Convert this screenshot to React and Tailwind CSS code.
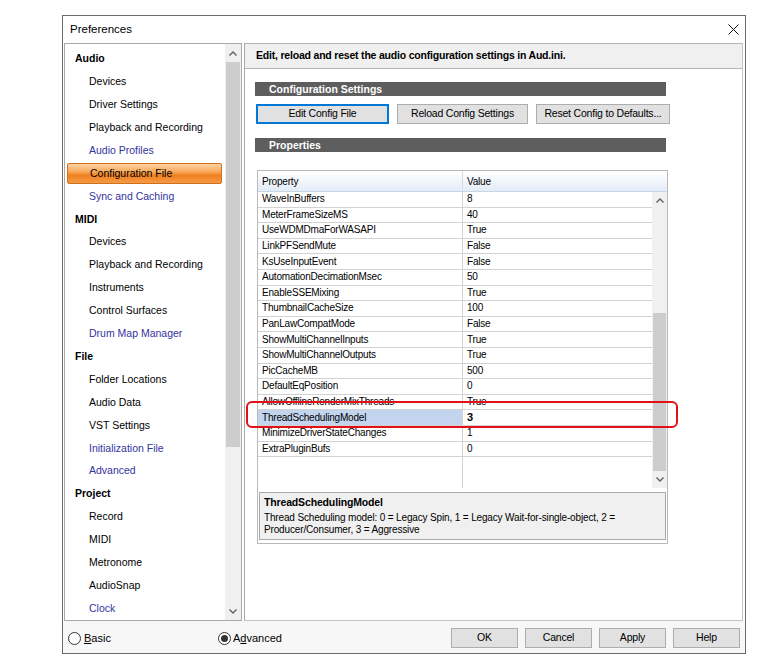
import React from "react";

const nav = [
  { t: "Audio", h: true },
  { t: "Devices" },
  { t: "Driver Settings" },
  { t: "Playback and Recording" },
  { t: "Audio Profiles", blue: true },
  { t: "Configuration File", sel: true },
  { t: "Sync and Caching", blue: true },
  { t: "MIDI", h: true },
  { t: "Devices" },
  { t: "Playback and Recording" },
  { t: "Instruments" },
  { t: "Control Surfaces" },
  { t: "Drum Map Manager", blue: true },
  { t: "File", h: true },
  { t: "Folder Locations" },
  { t: "Audio Data" },
  { t: "VST Settings" },
  { t: "Initialization File", blue: true },
  { t: "Advanced", blue: true },
  { t: "Project", h: true },
  { t: "Record" },
  { t: "MIDI" },
  { t: "Metronome" },
  { t: "AudioSnap" },
  { t: "Clock", blue: true },
];

const props = [
  ["WaveInBuffers", "8"],
  ["MeterFrameSizeMS", "40"],
  ["UseWDMDmaForWASAPI", "True"],
  ["LinkPFSendMute", "False"],
  ["KsUseInputEvent", "False"],
  ["AutomationDecimationMsec", "50"],
  ["EnableSSEMixing", "True"],
  ["ThumbnailCacheSize", "100"],
  ["PanLawCompatMode", "False"],
  ["ShowMultiChannelInputs", "True"],
  ["ShowMultiChannelOutputs", "True"],
  ["PicCacheMB", "500"],
  ["DefaultEqPosition", "0"],
  ["AllowOfflineRenderMixThreads", "True"],
  ["ThreadSchedulingModel", "3", true],
  ["MinimizeDriverStateChanges", "1"],
  ["ExtraPluginBufs", "0"],
];

const Chevron = ({ up }) => (
  <svg width="8" height="5" viewBox="0 0 8 5">
    <polyline
      points={up ? "0.5,4.5 4,1 7.5,4.5" : "0.5,0.5 4,4 7.5,0.5"}
      fill="none"
      stroke="#606060"
      strokeWidth="1.4"
    />
  </svg>
);

const SectionBar = ({ children }) => (
  <div className="w-[411px] h-[14px] bg-[#5e5e5e] text-white font-bold text-[10.5px] leading-[14px] pl-[14px]">
    {children}
  </div>
);

const Btn = ({ children, w, focus }) => (
  <div
    className={`${w} h-[20px] flex items-center justify-center text-[10.5px] tracking-[-0.2px] bg-[#e1e1e1] border ${
      focus ? "border-[#0078d7] shadow-[inset_0_0_0_1px_#0078d7]" : "border-[#adadad]"
    }`}
  >
    {children}
  </div>
);

export default function App() {
  return (
    <div
      className="relative w-[760px] h-[669px] bg-white pl-[62px] pt-[15px] text-black"
      style={{ fontFamily: '"Liberation Sans", Arial, sans-serif' }}
    >
      <div className="w-[684px] h-[639px] border border-[#6b6b6b] bg-white flex flex-col">
        {/* title bar */}
        <div className="h-[27px] flex items-center justify-between pl-[7px] pr-[6px] shrink-0">
          <span className="text-[11.5px]">Preferences</span>
          <svg width="11" height="11" viewBox="0 0 11 11">
            <path d="M0.5 0.5 L10.5 10.5 M10.5 0.5 L0.5 10.5" stroke="#111" strokeWidth="1" />
          </svg>
        </div>

        {/* body */}
        <div className="h-[578px] flex pl-px pr-[2px] shrink-0">
          {/* nav */}
          <div className="w-[178px] h-full border border-[#a9a9a9] flex bg-white">
            <div className="flex-1 overflow-hidden pt-[3.6px] text-[10.5px]">
              {nav.map((n, i) =>
                n.h ? (
                  <div key={i} className="h-[22.92px] flex items-center pl-[10px] font-bold">
                    {n.t}
                  </div>
                ) : n.sel ? (
                  <div key={i} className="h-[22.92px] py-px ml-[2px] mr-[3px]">
                    <div className="h-full flex items-center pl-[22px] rounded-[2px] border border-[#d0701c] bg-[linear-gradient(to_bottom,#fdd3a4,#f8a95c_40%,#f0801f_60%,#f59b46)]">
                      {n.t}
                    </div>
                  </div>
                ) : (
                  <div
                    key={i}
                    className={`h-[22.92px] flex items-center pl-[24px] ${n.blue ? "text-[#33339f]" : ""}`}
                  >
                    {n.t}
                  </div>
                )
              )}
            </div>
            <div className="w-[16px] bg-[#f0f0f0] flex flex-col">
              <div className="h-[18px] flex items-center justify-center">
                <Chevron up />
              </div>
              <div className="h-[385px] mx-[1px] bg-[#cdcdcd]" />
              <div className="flex-1" />
              <div className="h-[17px] flex items-center justify-center">
                <Chevron />
              </div>
            </div>
          </div>

          {/* right panel */}
          <div className="ml-[2px] flex-1 h-full border border-t-0 border-[#c4c4c4] border-l-[#a9a9a9] flex flex-col">
            <div className="h-[26px] bg-[#f0f0f0] border-t border-b border-[#b5b5b5] flex items-center pl-[11px] font-bold text-[10.5px] tracking-[-0.2px]">
              Edit, reload and reset the audio configuration settings in Aud.ini.
            </div>
            <div className="pl-[10px]">
              <div className="mt-[13px]">
                <SectionBar>Configuration Settings</SectionBar>
              </div>
              <div className="mt-[8px] ml-px flex gap-[8px]">
                <Btn w="w-[133px]" focus>
                  Edit Config File
                </Btn>
                <Btn w="w-[131px]">Reload Config Settings</Btn>
                <Btn w="w-[134px]">Reset Config to Defaults...</Btn>
              </div>
              <div className="mt-[14px]">
                <SectionBar>Properties</SectionBar>
              </div>

              {/* property grid */}
              <div className="mt-[18px] ml-[2px] w-[411px] h-[374px] border border-[#b9b9b9] flex flex-col bg-white">
                <div className="h-[21px] flex text-[10px] tracking-[-0.2px] border-b border-[#c5d5ea] bg-[linear-gradient(to_bottom,#ffffff,#f3f7fc_45%,#e2ebf6)]">
                  <div className="w-[205px] border-r border-[#d5dce6] flex items-center pl-[4px]">Property</div>
                  <div className="flex-1 flex items-center pl-[4px]">Value</div>
                </div>
                <div className="h-[296px] flex">
                  <div className="flex-1 flex flex-col text-[10px] tracking-[-0.2px]">
                    {props.map(([k, v, sel]) => (
                      <div key={k} className="h-[15.6px] shrink-0 flex border-b border-[#d2d2d2] leading-none">
                        <div
                          className={`w-[205px] border-r border-[#d2d2d2] flex items-center pl-[4px] whitespace-nowrap overflow-hidden ${
                            sel ? "bg-[#c3d5ee]" : ""
                          }`}
                        >
                          {k}
                        </div>
                        <div className={`flex-1 flex items-center pl-[4px] ${sel ? "font-bold text-[11px]" : ""}`}>
                          {v}
                        </div>
                      </div>
                    ))}
                    <div className="flex-1 flex">
                      <div className="w-[205px] border-r border-[#d2d2d2]" />
                    </div>
                  </div>
                  <div className="w-[15px] bg-[#f0f0f0] flex flex-col">
                    <div className="h-[16px] flex items-center justify-center">
                      <Chevron up />
                    </div>
                    <div className="h-[105px]" />
                    <div className="h-[158px] mx-px bg-[#cdcdcd]" />
                    <div className="flex-1 flex items-center justify-center">
                      <Chevron />
                    </div>
                  </div>
                </div>
                <div className="mt-[4px] mx-px h-[48px] bg-[#f0f0f0] border border-[#a9a9a9] px-[4px] pt-[3px] text-[10px] tracking-[-0.15px] leading-[12px]">
                  <div className="font-bold text-[10.5px] leading-[13px] mb-[3px]">ThreadSchedulingModel</div>
                  <div>
                    Thread Scheduling model: 0 = Legacy Spin, 1 = Legacy Wait-for-single-object, 2 =
                    <br />
                    Producer/Consumer, 3 = Aggressive
                  </div>
                </div>
              </div>
            </div>
          </div>
        </div>

        {/* bottom bar */}
        <div className="flex-1 flex items-center pl-[5px] pr-[5px] pt-[2px] bg-[#f7f7f7] text-[11px]">
          <div className="w-[150px] flex items-center gap-[3px]">
            <span className="w-[13px] h-[13px] rounded-full border border-[#333] bg-white" />
            <span>
              <span className="underline">B</span>asic
            </span>
          </div>
          <div className="flex items-center gap-[2px]">
            <span className="w-[13px] h-[13px] rounded-full border border-[#333] bg-white flex items-center justify-center">
              <span className="w-[7px] h-[7px] rounded-full bg-[#333]" />
            </span>
            <span>
              A<span className="underline">d</span>vanced
            </span>
          </div>
          <div className="ml-auto flex gap-[7px]">
            <Btn w="w-[67px]">OK</Btn>
            <Btn w="w-[67px]">Cancel</Btn>
            <Btn w="w-[67px]">Apply</Btn>
            <Btn w="w-[67px]">Help</Btn>
          </div>
        </div>
      </div>

      {/* annotation highlight */}
      <div className="absolute left-[246px] top-[401px] w-[432px] h-[27px] border-2 border-[#e3101a] rounded-[6px]" />
    </div>
  );
}
